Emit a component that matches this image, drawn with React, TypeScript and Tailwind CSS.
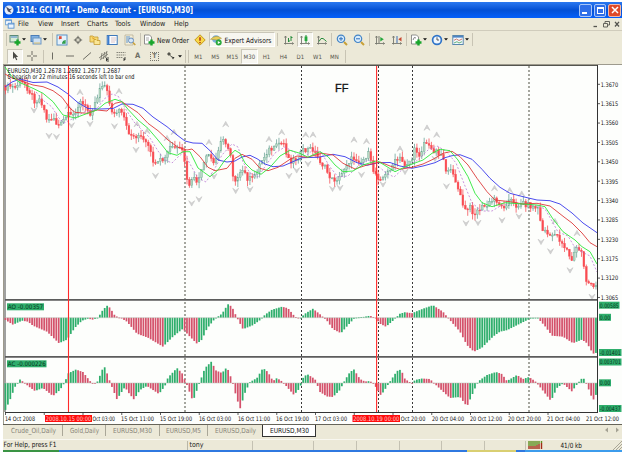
import type { ReactNode } from 'react'
import clsx from 'clsx'

type Point = [number, number]

const BAR_STEP = 2.42
const BAR_COUNT = 245
const PLOT_LEFT = 5.5

const menus = [
  { label: 'File', width: 'w-[20px]' },
  { label: 'View', width: 'w-[23px]' },
  { label: 'Insert', width: 'w-[26px]' },
  { label: 'Charts', width: 'w-[28px]' },
  { label: 'Tools', width: 'w-[25px]' },
  { label: 'Window', width: 'w-[34px]' },
  { label: 'Help', width: 'w-[20px]' },
]

const timeframes = ['M1', 'M5', 'M15', 'M30', 'H1', 'H4', 'D1', 'W1', 'MN']

const tabs = [
  { label: 'Crude_Oil,Daily', width: 'w-[58px]', text: 45 },
  { label: 'Gold,Daily', width: 'w-[43px]', text: 29 },
  { label: 'EURUSD,M30', width: 'w-[54px]', text: 39 },
  { label: 'EURUSD,M5', width: 'w-[48px]', text: 35 },
  { label: 'EURUSD,Daily', width: 'w-[54px]', text: 41 },
]

const prices = [
  '1.3670', '1.3615', '1.3560', '1.3505', '1.3450', '1.3395',
  '1.3340', '1.3285', '1.3230', '1.3175', '1.3120', '1.3065',
]

const dates = [
  { x: 5, w: 30, label: '14 Oct 2008' },
  { x: 92.5, w: 22.5, label: 'Oct 03:00' },
  { x: 121, w: 33, label: '15 Oct 11:00' },
  { x: 160, w: 32, label: '15 Oct 19:00' },
  { x: 199, w: 32, label: '16 Oct 03:00' },
  { x: 238, w: 32, label: '16 Oct 11:00' },
  { x: 276, w: 33, label: '16 Oct 19:00' },
  { x: 315, w: 32, label: '17 Oct 03:00' },
  { x: 400.8, w: 24.5, label: 'Oct 20:00' },
  { x: 432, w: 32, label: '20 Oct 04:00' },
  { x: 470, w: 32, label: '20 Oct 12:00' },
  { x: 508, w: 33, label: '20 Oct 20:00' },
  { x: 547, w: 33, label: '21 Oct 04:00' },
  { x: 586, w: 33, label: '21 Oct 12:00' },
]

const jaw: Point[] = [
  [5, 87], [12, 82], [20, 79], [33, 82.5], [47, 82], [58, 87], [68, 94], [78, 102.7], [88, 108.5], [100, 109],
  [113, 108.5], [122, 104], [133, 104.3], [143, 108.3], [153, 117], [167, 126.7], [177, 135], [185, 141],
  [193, 143], [202, 143.3], [210, 150.7], [218, 160], [227, 162], [235, 161], [242, 157], [250, 155.3],
  [257, 158.7], [265, 164], [273, 166.7], [283, 166], [293, 161.7], [302, 157.7], [318, 157.3], [333, 154.3],
  [345, 156.7], [357, 162.7], [367, 165.3], [378, 162.7], [390, 162.5], [400, 166], [412, 168.3], [423, 166],
  [435, 162.7], [445, 157.7], [452, 155.7], [460, 154.7], [472, 159.3], [482, 169.3], [490, 178.3],
  [500, 187.3], [510, 193.3], [523, 196.7], [537, 200], [550, 200.7], [560, 204], [572, 213], [583, 223], [597, 232.7],
]

const teeth: Point[] = [
  [5, 74], [12, 78], [20, 80.5], [33, 85], [43, 86.7], [53, 90.7], [62, 97.3], [70, 108.3], [75, 112.3],
  [87, 113.3], [97, 110], [107, 111], [115, 103.3], [122, 101.7], [128, 106], [138, 112.7], [148, 123.3],
  [158, 130.7], [168, 140], [178, 147.3], [187, 150], [192, 149], [200, 156.7], [208, 167.3], [215, 170.7],
  [227, 168.3], [235, 158.3], [242, 154.3], [252, 159.3], [260, 168.3], [268, 170.7], [278, 167.3],
  [290, 159.3], [297, 156], [307, 157.3], [322, 153.3], [333, 155], [343, 163.3], [355, 169], [367, 165],
  [380, 162], [390, 166], [400, 169.3], [412, 167.3], [423, 164], [433, 159.3], [443, 153.3], [452, 151.3],
  [460, 156.7], [468, 165], [477, 178.3], [487, 191.7], [495, 200], [510, 201.7], [523, 204], [537, 203.3],
  [550, 206], [564, 217], [572, 223], [582, 233], [590, 242.7], [597, 246.7],
]

const lips: Point[] = [
  [5, 67], [12, 76.7], [20, 82.7], [33, 88.3], [43, 93.3], [53, 101.7], [63, 115], [75, 118], [83, 115],
  [97, 110], [105, 103.3], [115, 99.3], [122, 101.7], [128, 109.3], [138, 120], [148, 128.3], [158, 140],
  [168, 152.7], [177, 155.3], [183, 151.7], [190, 151.7], [198, 168], [210, 176.7], [218, 170], [225, 160],
  [235, 150.3], [240, 153.3], [245, 163], [252, 170], [261, 174.3], [270, 167.3], [280, 156], [290, 150.3],
  [300, 153.3], [308, 157.3], [320, 151.7], [328, 156.7], [335, 165], [343, 171.7], [353, 171], [363, 165],
  [377, 160.7], [387, 166.7], [395, 171.7], [407, 166], [423, 160], [432, 153.3], [440, 149.3], [450, 150.7],
  [458, 160], [468, 176.7], [475, 193.3], [482, 202.7], [492, 206.7], [505, 202.7], [523, 204], [537, 205],
  [545, 206.7], [553, 219], [563, 231.7], [575, 240], [582, 246.7], [590, 251.7], [597, 264],
]

const signal: Point[] = [
  [36, 92], [44, 101], [52, 107], [58, 117], [64, 123], [72, 119], [84, 112], [96, 110], [104, 99], [112, 94],
  [118, 96], [125, 108], [134, 122], [143, 131], [150, 138], [158, 151], [165, 160], [172, 163], [178, 157],
  [184, 152], [190, 164], [198, 178], [206, 182], [214, 170], [222, 155], [232, 144], [238, 147], [243, 162],
  [250, 173], [258, 177], [266, 165], [275, 153], [285, 147], [294, 152], [303, 158], [313, 150], [321, 152],
  [330, 167], [338, 177], [348, 176], [358, 166], [368, 160], [376, 164], [386, 173], [394, 177], [404, 168],
  [418, 160], [428, 150], [437, 146], [446, 151], [456, 163], [465, 186], [472, 203], [482, 211], [492, 211],
  [502, 205], [512, 203], [525, 204], [538, 206], [545, 209], [552, 221], [558, 232], [568, 236], [574, 246],
  [582, 252], [590, 256], [597, 272],
]

const closes: Point[] = [
  [5, 88], [10, 86], [15, 88], [20, 82], [25, 84], [30, 92], [35, 101], [40, 99], [43, 105], [46, 118], [50, 121],
  [53, 116], [57, 125], [60, 126], [64, 120], [68, 115], [72, 117], [76, 110], [80, 102], [85, 107], [90, 113],
  [94, 105], [98, 95], [101, 84], [104, 84], [107, 92], [111, 108], [114, 115], [119, 111], [124, 118],
  [127, 130], [133, 137], [138, 135], [143, 140], [148, 147], [152, 158], [156, 167], [160, 161], [165, 160],
  [169, 148], [174, 147], [179, 150], [184, 153], [186, 180], [189, 185], [193, 180], [197, 181], [200, 177],
  [205, 160], [210, 154], [213, 165], [217, 157], [220, 139], [225, 143], [228, 147], [231, 155], [233, 175],
  [237, 181], [243, 170], [247, 178], [252, 180], [257, 170], [262, 160], [268, 150], [275, 149], [279, 143],
  [284, 144], [288, 158], [292, 161], [297, 158], [302, 152], [307, 150], [313, 149], [318, 158], [325, 168],
  [332, 180], [340, 178], [345, 166], [350, 160], [355, 158], [362, 162], [368, 153], [373, 170], [378, 177],
  [385, 177], [390, 168], [395, 162], [400, 159], [405, 165], [412, 159], [415, 149], [420, 155], [425, 140],
  [430, 149], [437, 151], [443, 156], [447, 174], [453, 171], [457, 186], [462, 202], [465, 211], [470, 208],
  [475, 214], [480, 208], [487, 206], [495, 198], [502, 208], [510, 199], [515, 206], [523, 203], [533, 207],
  [539, 208], [541, 229], [545, 230], [550, 238], [555, 232], [560, 240], [567, 250], [571, 262], [577, 247],
  [582, 253], [586, 280], [593, 288], [597, 286],
]

// Oscillator values in pixels below the zero line
const ao: Point[] = [
  [5, 2], [13, 7], [22, 3], [28, 4], [33, 8], [47, 14], [59, 25.5], [67, 22], [75, 10], [82, 3], [88, 1], [93, 2],
  [98, 0], [103, -8], [107, -12], [110, -10], [115, -2], [122, 1], [127, 4], [137, 16], [148, 20], [163, 29],
  [173, 19], [183, 11], [188, 17], [197, 26], [202, 22], [207, 11], [215, 1], [222, -4], [228, -13.5],
  [232, -11], [237, 0], [243, 11.5], [253, 7.5], [260, 2.5], [265, -3], [272, -8], [282, -11], [288, -9.5],
  [295, -1], [300, 0.7], [305, -4], [313, -9], [320, -3.5], [327, 3], [333, 11.5], [341, 15.5], [348, 7.5],
  [355, 0], [363, -0.7], [370, -2], [376, 0.5], [380, 6], [386, 9], [393, 3], [400, -4], [405, -5.5],
  [412, -4.5], [423, -9], [433, -12.5], [443, -6], [450, 2.5], [460, 14], [467, 27.5], [474, 34], [482, 30],
  [493, 19], [500, 14], [507, 12.5], [520, 6], [530, 1], [538, 0.7], [545, 8.5], [552, 18], [563, 19],
  [573, 25.5], [582, 22], [587, 25.5], [593, 36], [597, 35],
]

const ac: Point[] = [
  [5, 28], [10, 17], [15, 4], [20, -3.5], [25, 0], [28, 3], [35, 8], [43, 5], [53, 13], [60, 7], [65, -1],
  [68, -9.5], [76, -13.5], [83, -11], [90, -2], [94, 1.5], [98, -2], [102, -13], [105, -16], [108, -7],
  [112, 4], [117, 16.5], [121, 10], [125, 4], [128, 9], [134, 16.5], [140, 7], [147, 3], [153, 7], [159, 11],
  [165, 3], [168, -5.5], [177, -15], [182, -10], [187, 2], [193, 18.5], [198, 4], [205, -15], [212, -22],
  [215, -13], [222, -10], [227, -16], [232, -3], [235, 9], [240, 26], [245, 10], [250, -1], [257, -5],
  [263, -15], [268, -11], [273, -2], [277, -5], [283, -1], [287, 4], [294, 12], [300, 5], [303, -5],
  [307, -9], [315, -4], [320, 9], [327, 13.5], [333, 14], [340, 7], [345, -3], [350, -11], [354, -13.5],
  [360, -4], [365, -1.5], [370, -2], [374, 1], [381, 12.5], [386, 5], [391, -3], [397, -12], [401, -13.5],
  [405, -4], [412, 0.5], [415, -3], [422, -4.5], [430, -4], [437, 3], [450, 15], [460, 14], [467, 23.5],
  [473, 10], [478, -1.5], [487, -8], [496, -11], [502, -9], [507, -2], [517, -8], [523, -4], [529, -6],
  [535, -2], [540, 4], [551, 18], [557, 5], [563, 0.5], [572, 8.5], [578, 0], [583, -6], [587, 2],
  [593, 17.5], [597, 10],
]

const fractalsUp: Point[] = [
  [68, 106], [80, 92], [119, 91], [137, 124], [147, 131], [167, 138], [174, 132], [209, 142], [225.7, 124],
  [269, 139], [281.7, 132], [305.7, 134.5], [313, 134.5], [354, 139.5], [366.5, 141], [400, 148.5],
  [427, 127.5], [436.7, 134.5], [494.5, 188], [509.7, 190], [521.7, 193.5], [555, 221], [577, 233],
]

const fractalsDown: Point[] = [
  [34, 110.5], [49, 136], [56.5, 137], [71.5, 125.5], [90, 124], [114.5, 126.5], [136, 150], [155.5, 176],
  [191.7, 203.5], [199, 199.5], [214, 176.5], [235.7, 191], [250, 189.5], [289, 176], [296.7, 170.5],
  [308, 164], [332.5, 189], [340, 188], [361.5, 175], [383, 184.5], [405, 172], [435, 159], [446.5, 186.5],
  [466, 223.5], [478, 223], [502, 220.5], [519, 216.5], [541, 242], [550.5, 251.5], [570, 270.5], [592, 297],
]

function valueAt(points: Point[], x: number) {
  for (let i = 1; i < points.length; i++) {
    const [x1, y1] = points[i]
    if (x <= x1) {
      const [x0, y0] = points[i - 1]
      return y0 + ((y1 - y0) * (x - x0)) / (x1 - x0)
    }
  }
  return points[points.length - 1][1]
}

function toPath(points: Point[]) {
  return 'M' + points.map(([x, y]) => `${x} ${y}`).join('L')
}

function noise(n: number) {
  const v = Math.sin(n * 12.9898) * 43758.5453
  return v - Math.floor(v)
}

const barXs = Array.from({ length: BAR_COUNT }, (_, i) => PLOT_LEFT + i * BAR_STEP)

function Candles() {
  return (
    <g>
      {barXs.map((x, i) => {
        const open = valueAt(closes, x - BAR_STEP) + (noise(i) - 0.5) * 6
        const close = valueAt(closes, x) + (noise(i + 1) - 0.5) * 6
        const top = Math.min(open, close)
        const height = Math.max(1, Math.abs(open - close))
        const down = close > open
        const high = top - noise(i + 300) * 6
        const low = top + height + noise(i + 600) * 6
        return (
          <g key={i}>
            <path d={`M${x} ${high}V${low}`} stroke={down ? '#f4545a' : '#6fa59b'} strokeWidth="0.8" />
            <rect
              x={x - 0.9}
              y={top}
              width="1.8"
              height={height}
              fill={down ? '#fb4a50' : '#b9d9c4'}
              stroke={down ? '#f5585e' : '#6aa892'}
              strokeWidth="0.4"
            />
          </g>
        )
      })}
    </g>
  )
}

function Histogram({ points, zero }: { points: Point[]; zero: number }) {
  return (
    <g>
      {barXs.map((x, i) => {
        const value = valueAt(points, x)
        const rising = value < valueAt(points, x - BAR_STEP)
        return (
          <rect
            key={i}
            x={x - 0.9}
            y={value < 0 ? zero + value : zero}
            width="1.75"
            height={Math.max(0.8, Math.abs(value))}
            fill={rising ? '#2fae6c' : '#d4526b'}
          />
        )
      })}
      <path d={`M5 ${zero}H597`} stroke="#b8c0b8" strokeWidth="0.5" />
    </g>
  )
}

type LabelProps = { x: number; y: number; w: number; fill?: string; size?: number; children: string }

function Label({ x, y, w, fill = '#111', size = 6.2, children }: LabelProps) {
  return (
    <text x={x} y={y} fontSize={size} fill={fill} textLength={w} lengthAdjust="spacingAndGlyphs">
      {children}
    </text>
  )
}

function Tag({ x, y, w, color = '#2fae6c', textColor = '#06351c', children }: {
  x: number
  y: number
  w: number
  color?: string
  textColor?: string
  children: string
}) {
  return (
    <>
      <rect x={x} y={y} width={w} height="7" fill={color} />
      <Label x={x + 0.8} y={y + 5.8} w={w - 1.6} fill={textColor}>{children}</Label>
    </>
  )
}

function Chart() {
  return (
    <svg viewBox="3 64 619 360" className="block h-[360px] w-[619px] shrink-0">
      <rect x="3" y="64" width="619" height="360" fill="#fdfefc" />
      <path d="M3 64.5H622M3.5 64V424" stroke="#9d9a8d" />
      <path d="M4 65.5H598" stroke="#55554f" />
      <path d="M5 65V412" stroke="#444" />

      <path d="M301.5 66V412M378.5 66V412M412.5 66V412" stroke="#222" strokeWidth="0.9" strokeDasharray="2 2" />
      <path d="M185 66V412M529 66V412" stroke="#77776d" strokeWidth="1.3" strokeDasharray="2 2" />

      {fractalsUp.map(([x, y]) => (
        <path key={`${x}-${y}`} d={`M${x - 3} ${y + 2.8}L${x} ${y - 2.6}L${x + 3} ${y + 2.8}L${x} ${y + 0.6}Z`} fill="#d2d2d2" stroke="#c4c4c4" strokeWidth="0.6" />
      ))}
      {fractalsDown.map(([x, y]) => (
        <path key={`${x}-${y}`} d={`M${x - 3} ${y - 2.8}L${x} ${y + 2.6}L${x + 3} ${y - 2.8}L${x} ${y - 0.6}Z`} fill="#d2d2d2" stroke="#c4c4c4" strokeWidth="0.6" />
      ))}

      <Candles />
      <g fill="none" strokeWidth="0.9" strokeLinejoin="round">
        <path d={toPath(signal)} stroke="#b368cf" strokeWidth="0.7" strokeDasharray="2 1.8" />
        <path d={toPath(jaw)} stroke="#3838ec" />
        <path d={toPath(teeth)} stroke="#dc3a3a" />
        <path d={toPath(lips)} stroke="#2ee83a" />
      </g>

      <Histogram points={ao} zero={317.7} />
      <Histogram points={ac} zero={383} />

      <path d="M5 299.8H597M5 356.8H597" stroke="#5c5c5c" strokeWidth="1.8" />
      <path d="M5 412.5H598M597.5 65V413" stroke="#333" />
      <path d="M68.5 66V412M376.6 66V412" stroke="#ff2a2a" strokeWidth="1.1" />

      <Label x={7.5} y={72.6} w={113} size={6.6}>EURUSD,M30  1.2678 1.2692 1.2677 1.2687</Label>
      <Label x={7.5} y={79.2} w={127} size={6.6}>0 bearish or 22 minutes 16 seconds left to bar end</Label>
      <text x="335" y="91.5" fontSize="11" fill="#111" stroke="#111" strokeWidth="0.3" fontFamily="Liberation Sans, sans-serif">FF</text>

      {prices.map((price, i) => {
        const y = 84.3 + i * 19.38
        return (
          <g key={price}>
            <path d={`M597 ${y}H600`} stroke="#333" strokeWidth="0.8" />
            <Label x={600.7} y={y + 2.3} w={17.5}>{price}</Label>
          </g>
        )
      })}

      <Tag x={7} y={303.3} w={37}>AO -0.00357</Tag>
      <Tag x={7} y={360.3} w={39.5}>AC -0.000226</Tag>
      <Tag x={599} y={301.7} w={20.5}>0.00585</Tag>
      <Tag x={599} y={313.8} w={12}>0.00</Tag>
      <Tag x={599} y={349} w={22.5}>-0.01401</Tag>
      <Tag x={599} y={358.5} w={22.5}>0.003701</Tag>
      <Tag x={599} y={379.3} w={12}>0.00</Tag>
      <Tag x={599} y={405} w={22.5}>-0.00437</Tag>

      {Array.from({ length: 15 }, (_, i) => (
        <path key={i} d={`M${PLOT_LEFT + i * 38.75} 412V415`} stroke="#333" strokeWidth="0.8" />
      ))}
      {dates.map((date) => (
        <Label key={date.x} x={date.x} y={420.6} w={date.w}>{date.label}</Label>
      ))}
      <Tag x={45} y={415} w={47} color="#ff0d0d" textColor="#ffd0d0">2008.10.15 00:00</Tag>
      <Tag x={352.5} y={415} w={47.5} color="#ff0d0d" textColor="#ffd0d0">2008.10.19 00:00</Tag>
    </svg>
  )
}

function Icon({ children, className = 'h-[12px] w-[12px]' }: { children: ReactNode; className?: string }) {
  return (
    <svg viewBox="0 0 12 12" fill="none" className={clsx('shrink-0', className)}>
      {children}
    </svg>
  )
}

function Slot({ width = 'w-[17px]', pressed = false, children }: { width?: string; pressed?: boolean; children: ReactNode }) {
  return (
    <div
      className={clsx(
        'flex h-[15px] shrink-0 items-center justify-center',
        width,
        pressed && 'border border-[#c9c6b8] border-r-white border-b-white bg-[#f7f6f0]'
      )}
    >
      {children}
    </div>
  )
}

function Divider({ width = 'w-[3px]' }: { width?: string }) {
  return (
    <div className={clsx('flex h-[13px] shrink-0 justify-center', width)}>
      <div className="w-px bg-[#c8c4b4]" />
    </div>
  )
}

function Caret() {
  return (
    <svg viewBox="0 0 4 3" className="ml-[1px] h-[3px] w-[4px] shrink-0">
      <path d="M0 0.3H4L2 2.6Z" fill="#111" />
    </svg>
  )
}

const plus = <path d="M8.5 5.5V11.5M5.5 8.5H11.5" stroke="#18a52c" strokeWidth="2.4" />
const axes = <path d="M2.5 2V10.5M1 9.5H10.5M1.5 3.5L2.5 2L3.5 3.5M9.3 8.3L10.5 9.5L9.3 10.5" stroke="#77786f" strokeWidth="0.9" />

function StandardToolbar() {
  return (
    <div className="flex h-[17px] items-center pl-[2px]">
      <Divider width="w-[2px]" />
      <Slot width="w-[20px]">
        <Icon>
          <rect x="1" y="1.5" width="8" height="6.5" fill="#d8ecd8" stroke="#5c8a78" />
          <path d="M2 3h6" stroke="#4a86c8" />
          {plus}
        </Icon>
        <Caret />
      </Slot>
      <Slot width="w-[23px]">
        <Icon>
          <rect x="1" y="1.5" width="8" height="6" fill="#7fb0e4" stroke="#4d7db5" />
          <rect x="3" y="4" width="8" height="6" fill="#cfe2f5" stroke="#6b96c2" />
          <path d="M4 9h6" stroke="#e0c068" />
        </Icon>
        <Caret />
      </Slot>
      <Divider width="w-[5px]" />
      <Slot width="w-[13px]">
        <Icon>
          <rect x="1" y="1" width="10" height="10" fill="#e6f2fc" stroke="#5b92c4" />
          <path d="M3 5L5 3M3 3h2v2" stroke="#e04832" strokeWidth="1.3" />
          <path d="M7 7l2 2M9 6v3H6" stroke="#2b9c48" strokeWidth="1.3" />
        </Icon>
      </Slot>
      <Slot width="w-[20px]">
        <Icon className="h-[10px] w-[10px]">
          <circle cx="6" cy="6" r="3" stroke="#6a6a62" strokeWidth="1.2" />
          <path d="M6 1V5M6 7V11M1 6H5M7 6H11" stroke="#6a6a62" strokeWidth="1.2" />
        </Icon>
      </Slot>
      <Slot width="w-[14px]">
        <Icon>
          <path d="M1 2h3l1 1h4v5H1z" fill="#f8db73" stroke="#c49a30" strokeWidth="0.8" />
          <path d="M5 5.5h2l1 1h3v4H5z" fill="#fbe694" stroke="#c49a30" strokeWidth="0.8" />
          <path d="M2 1.5l1.5 2L6 4l-2 1.5" fill="#e3a42a" />
        </Icon>
      </Slot>
      <Slot width="w-[19px]">
        <Icon>
          <rect x="1.2" y="1.5" width="10" height="9" fill="#f8fcff" stroke="#3f78ba" />
          <path d="M2.5 2v8" stroke="#3b7bd0" strokeWidth="1.8" />
          <path d="M5 4h5M5 6h5M5 8h4" stroke="#cfa0a0" strokeWidth="0.6" />
        </Icon>
      </Slot>
      <Slot width="w-[18px]">
        <Icon>
          <path d="M1 1h8v10H1z" fill="#f5efd8" stroke="#b2ab90" strokeWidth="0.7" />
          <path d="M3 2v7M5 2v3" stroke="#5d94d0" />
          <circle cx="7" cy="6.5" r="2.5" fill="#d5e6f6" stroke="#6a8fc0" />
          <path d="M9 8.5L11.3 11" stroke="#c8a038" strokeWidth="1.4" />
        </Icon>
      </Slot>
      <Divider />
      <Slot width="w-[14px]">
        <Icon>
          <path d="M1.5 1h5l2 2v7h-7z" fill="#fff" stroke="#777" strokeWidth="0.8" />
          <path d="M3 4h3M3 6h3" stroke="#888" strokeWidth="0.7" />
          {plus}
        </Icon>
      </Slot>
      <svg viewBox="0 0 35 12" className="h-[12px] w-[35px] shrink-0">
        <Label x={1} y={8.8} w={32} size={7.3}>New Order</Label>
      </svg>
      <Slot width="w-[18px]">
        <Icon>
          <path d="M6 0.8L11.2 6L6 11.2L0.8 6Z" fill="#f9d84a" stroke="#c59a1d" />
          <path d="M6 3.3V6.8M6 8V9.2" stroke="#b03018" strokeWidth="1.5" />
        </Icon>
      </Slot>
      <Slot width="w-[66px]" pressed>
        <Icon className="h-[12px] w-[12px]">
          <circle cx="6" cy="5" r="3.8" fill="#7caede" />
          <path d="M0.5 5.3Q6 0 11.5 4.3L7 6z" fill="#e9ce59" stroke="#9e8d38" strokeWidth="0.5" />
          <circle cx="8.7" cy="8.5" r="3" fill="#28a83c" />
          <path d="M7.8 6.9L10.4 8.5L7.8 10.1Z" fill="#fff" />
        </Icon>
        <svg viewBox="0 0 50 12" className="ml-[2px] h-[12px] w-[50px] shrink-0">
          <Label x={0.5} y={8.8} w={47} size={7.3}>Expert Advisors</Label>
        </svg>
      </Slot>
      <Divider width="w-[5px]" />
      <Slot>
        <Icon>{axes}<path d="M5.5 4V8M8 2V7M5.5 7H7M8 3.5H9.5" stroke="#278c3c" /></Icon>
      </Slot>
      <Slot width="w-[16px]" pressed>
        <Icon>{axes}<path d="M7 1V9" stroke="#278c3c" /><rect x="5.6" y="2.5" width="2.8" height="4.5" fill="#25a73c" /></Icon>
      </Slot>
      <Slot>
        <Icon>{axes}<path d="M3 7.5Q5 3 7 4.5T10.5 7.5" stroke="#278c3c" /></Icon>
      </Slot>
      <Divider />
      <Slot>
        <Icon>
          <circle cx="5" cy="4.8" r="3.7" fill="#d9ecfb" stroke="#4384c6" strokeWidth="1.2" />
          <path d="M3 4.8H7M5 2.8V6.8" stroke="#2d70bd" />
          <path d="M8 8L11 11" stroke="#c8a038" strokeWidth="1.9" />
        </Icon>
      </Slot>
      <Slot>
        <Icon>
          <circle cx="5" cy="4.8" r="3.7" fill="#d9ecfb" stroke="#4384c6" strokeWidth="1.2" />
          <path d="M3 4.8H7" stroke="#2d70bd" />
          <path d="M8 8L11 11" stroke="#c8a038" strokeWidth="1.9" />
        </Icon>
      </Slot>
      <Divider width="w-[4px]" />
      <Slot>
        <Icon>{axes}<path d="M5 2V9" stroke="#77786f" /><path d="M6.3 3L9.8 5.3L6.3 7.6Z" fill="#25a73c" /></Icon>
      </Slot>
      <Slot>
        <Icon>{axes}<path d="M6 2V9" stroke="#3c6cb4" /><path d="M10.5 3L7.3 5.3L10.5 7.6Z" fill="#c84830" /></Icon>
      </Slot>
      <Divider />
      <Slot width="w-[20px]">
        <Icon>
          <path d="M1.5 1h5l2 2v7h-7z" fill="#fff" stroke="#777" strokeWidth="0.8" />
          <path d="M3 6Q4 2 6 4" stroke="#666" strokeWidth="0.8" />
          {plus}
        </Icon>
        <Caret />
      </Slot>
      <Slot width="w-[22px]">
        <Icon>
          <circle cx="6" cy="6" r="4.4" fill="#eff7ff" stroke="#2f74c8" strokeWidth="1.7" />
          <path d="M6 3.3V6H8" stroke="#555" />
        </Icon>
        <Caret />
      </Slot>
      <Slot width="w-[20px]">
        <Icon>
          <rect x="0.8" y="1.5" width="10.4" height="9" fill="#f3f8fc" stroke="#5987ad" />
          <path d="M1 2.8H11" stroke="#4c84c4" strokeWidth="1.6" />
          <path d="M2 6.3L4.5 5L7 6.5L10 5" stroke="#c05c48" strokeWidth="0.8" />
          <path d="M2 9L5 7.7L7 9L10 7.7" stroke="#40a05c" strokeWidth="0.8" />
        </Icon>
        <Caret />
      </Slot>
      <Divider width="w-[5px]" />
    </div>
  )
}

function LineToolbar() {
  return (
    <div className="flex h-[16px] items-center pl-[4px] text-[#6e6d64]">
      <Slot width="w-[16px]" pressed>
        <Icon><path d="M4 1.5V9L5.8 7.3L7.2 10.3L8.3 9.7L7 7H9.2Z" fill="#4a4a45" /></Icon>
      </Slot>
      <Slot width="w-[18px]">
        <Icon><path d="M6 1V5M6 7V11M1 6H5M7 6H11" stroke="currentColor" /></Icon>
      </Slot>
      <Divider width="w-[4px]" />
      <Slot width="w-[16px]">
        <Icon><path d="M5.5 2.5V9.5" stroke="currentColor" /></Icon>
      </Slot>
      <Slot>
        <Icon><path d="M2 6H10" stroke="currentColor" /></Icon>
      </Slot>
      <Slot>
        <Icon><path d="M2 9.5L10 2.5" stroke="currentColor" /></Icon>
      </Slot>
      <Slot>
        <Icon>
          <path d="M1 8L9 2M2 10L10 4M4 3L3 9M6.5 2L5.5 9M9 1L7.5 8" stroke="currentColor" strokeWidth="0.8" />
          <path d="M11 8H8.5V11H11M8.5 9.5H10.5" stroke="#222" strokeWidth="0.8" />
        </Icon>
      </Slot>
      <Slot>
        <Icon>
          <path d="M1.5 2.5H10.5M1.5 5H10.5M1.5 7.5H8" stroke="currentColor" strokeWidth="0.8" strokeDasharray="1.5 0.6" />
          <path d="M11 8H9V11M9 9.5H10.5" stroke="#222" strokeWidth="0.8" />
        </Icon>
      </Slot>
      <Slot><span className="text-[7.5px] leading-[10px] font-bold">A</span></Slot>
      <Slot>
        <span className="flex h-[9px] w-[9px] items-center justify-center border border-dotted border-[#77766c] text-[6.5px] leading-[7px] font-bold">T</span>
      </Slot>
      <Slot width="w-[20px]">
        <Icon>
          <path d="M2 4L4 2L6 4L4 6Z" fill="#55554d" />
          <path d="M6.5 7L9.5 7L8 9.5Z" fill="#33332f" />
          <path d="M5 5.5L8 7.5" stroke="#66665d" />
        </Icon>
        <Caret />
      </Slot>
      <Divider width="w-[4px]" />
      <Divider width="w-[3px]" />
      {timeframes.map((frame) => (
        <Slot key={frame} pressed={frame === 'M30'}>
          <span className="text-[6px] leading-[9px] tracking-[0.1px] text-[#55544c]">{frame}</span>
        </Slot>
      ))}
      <Divider width="w-[4px]" />
    </div>
  )
}

function TitleBar() {
  return (
    <div className="flex h-[16px] shrink-0 items-center bg-gradient-to-b from-[#2b78f0] via-[#0450d4] to-[#0560fa] pr-[1px] pl-[1px]">
      <svg viewBox="0 0 10 10" className="h-[10px] w-[10px]">
        <circle cx="5" cy="5" r="4.5" fill="#e8effa" />
        <path d="M2 1.5L5.5 4L8.5 3.5L6 5.5L7.5 8L4 6.5Z" fill="#4b4f68" />
      </svg>
      <svg viewBox="0 0 184 14" className="ml-[1px] h-[14px] w-[184px]">
        <text x="1" y="10" fontSize="8.4" fontWeight="bold" fill="#fff" textLength="177" lengthAdjust="spacingAndGlyphs">
          1314: GCI MT4 - Demo Account - [EURUSD,M30]
        </text>
      </svg>
      <div className="ml-auto flex gap-[2px]">
        <div className="flex h-[13px] w-[13px] items-end rounded-[2px] border border-[#a9c6f8] bg-[#2f6ee8] pb-[2px] pl-[2px]">
          <div className="h-[2px] w-[5px] bg-white" />
        </div>
        <div className="flex h-[13px] w-[12px] items-center justify-center rounded-[2px] border border-[#a9c6f8] bg-[#2f6ee8]">
          <div className="h-[7px] w-[7px] border border-t-2 border-white" />
        </div>
        <div className="flex h-[13px] w-[13px] items-center justify-center rounded-[2px] border border-[#f0b8a8] bg-[#df4a28]">
          <svg viewBox="0 0 8 8" className="h-[8px] w-[8px]"><path d="M1 1L7 7M7 1L1 7" stroke="#fff" strokeWidth="1.5" /></svg>
        </div>
      </div>
    </div>
  )
}

function MenuBar() {
  return (
    <div className="flex h-[13px] items-center border-b border-[#d0ccbc] pl-[2px] text-[7.2px] leading-[10px]">
      <Icon className="mr-[3px] h-[10px] w-[10px]">
        <rect x="0.8" y="1" width="7" height="6" fill="#fff" stroke="#5c96d2" />
        <rect x="3.8" y="5" width="7" height="6" fill="#e9f4ff" stroke="#4f8bcc" />
        <path d="M1 2h7M4 6h7" stroke="#4f8bcc" />
      </Icon>
      {menus.map((menu) => (
        <span key={menu.label} className={clsx('shrink-0 tracking-[-0.05px]', menu.width)}>{menu.label}</span>
      ))}
      <svg viewBox="0 0 30 8" fill="none" stroke="#55554f" className="mr-[1px] ml-auto h-[8px] w-[30px]">
        <path d="M2.5 6.5H6" strokeWidth="1.3" />
        <path d="M12.5 3.5H16.5V7H12.5ZM14 3V1.5H18.5V5H17" strokeWidth="0.9" />
        <path d="M24 1.8L28 6.5M28 1.8L24 6.5" strokeWidth="1.3" />
      </svg>
    </div>
  )
}

function TabBar() {
  return (
    <div className="flex h-[15px] items-start border-t border-[#666459] pl-[2px]">
      {tabs.map((tab, i) => (
        <div key={`${tab.label}-${i}`} className={clsx('flex h-[11px] shrink-0 items-center justify-center', tab.width, i < 4 && 'border-r border-[#aaa798]')}>
          <svg viewBox={`0 0 ${tab.text + 2} 11`} className="h-[11px]" style={{ width: tab.text + 2 }}>
            <Label x={1} y={8} w={tab.text} size={7} fill="#858276">{tab.label}</Label>
          </svg>
        </div>
      ))}
      <div className="flex h-[12px] w-[54px] shrink-0 items-center justify-center border border-t-0 border-[#333] bg-white">
        <svg viewBox="0 0 41 11" className="h-[11px] w-[41px]">
          <Label x={1} y={8} w={39} size={7}>EURUSD,M30</Label>
        </svg>
      </div>
      <svg viewBox="0 0 16 6" className="mt-[2px] mr-[2px] ml-auto h-[6px] w-[16px]" fill="#a5a294">
        <path d="M4 0.5V5.5L1 3ZM12 0.5V5.5L15 3Z" />
      </svg>
    </div>
  )
}

function StatusBar() {
  return (
    <div className="flex h-[11px] items-center border-t border-[#f8f7f0] text-[7px] leading-[9px]">
      <div className="w-[184px] shrink-0">
        <svg viewBox="0 0 58 10" className="h-[10px] w-[58px]">
          <Label x={0.5} y={7.3} w={53} size={7.2}>For Help, press F1</Label>
        </svg>
      </div>
      <div className="flex h-[9px] w-[65px] shrink-0 items-center border-l border-[#b9b6a6] pl-[1.5px]">tony</div>
      <div className="h-[9px] w-[61px] shrink-0 border-l border-[#c4c1b2]" />
      <div className="h-[9px] w-[43px] shrink-0 border-l border-[#c4c1b2]" />
      <div className="h-[9px] w-[43px] shrink-0 border-l border-[#c4c1b2]" />
      <div className="h-[9px] w-[42px] shrink-0 border-l border-[#c4c1b2]" />
      <div className="h-[9px] w-[43px] shrink-0 border-l border-[#c4c1b2]" />
      <div className="h-[9px] w-[41px] shrink-0 border-l border-[#c4c1b2]" />
      <div className="flex h-[9px] grow items-center border-l border-[#c4c1b2] pl-[2px]">
        <svg viewBox="0 0 15 8" className="h-[8px] w-[15px]">
          <path d="M1 0V5M3 0V5M5 0V5M7 0V5M9 0V4M11 0V3M13.5 0V2" stroke="#5f8f1e" strokeWidth="1.4" />
          <path d="M1 5V8M3 5V8M5 5V8M7 5V8M9 4V8M11 3V8M13.5 2V8" stroke="#a22a14" strokeWidth="1.4" />
        </svg>
        <svg viewBox="0 0 25 10" className="ml-[17px] h-[10px] w-[25px]">
          <Label x={0.5} y={7.5} w={21.5} size={7.2}>41/0 kb</Label>
        </svg>
        <svg viewBox="0 0 10 9" className="ml-auto h-[9px] w-[10px]">
          <path d="M1 9L10 0M4 9L10 3M7 9L10 6" stroke="#a9a696" />
        </svg>
      </div>
    </div>
  )
}

export default function App() {
  return (
    <div className="flex h-[452px] w-[625px] flex-col overflow-hidden bg-white pt-[2px] pr-[3px] pl-[3px] font-['DejaVu_Sans_Condensed','DejaVu_Sans',sans-serif] text-[#1a1a1a]">
      <TitleBar />
      <div className="flex shrink-0 flex-col bg-[#ece9d8]">
        <MenuBar />
        <StandardToolbar />
        <LineToolbar />
      </div>
      <Chart />
      <div className="flex shrink-0 flex-col bg-[#ece9d8]">
        <TabBar />
        <StatusBar />
      </div>
      <div className="flex grow bg-[#2f78e0]">
        <div className="w-[56px] bg-[#3a9444]" />
        <div className="w-[408px]" />
        <div className="w-[49px] bg-[#d9cf72]" />
        <div className="w-[9px]" />
        <div className="grow bg-[#3c9cec]" />
      </div>
    </div>
  )
}
